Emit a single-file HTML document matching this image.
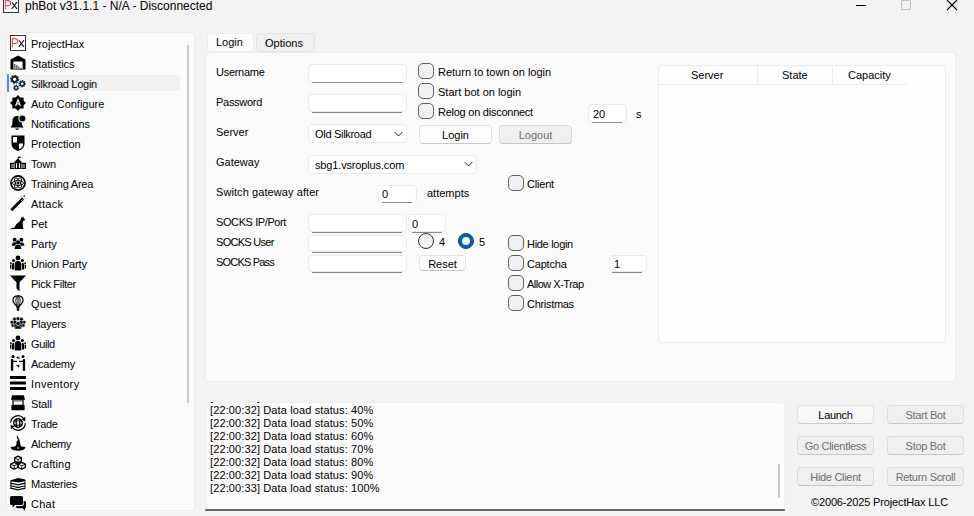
<!DOCTYPE html>
<html><head><meta charset="utf-8">
<style>
*{margin:0;padding:0;box-sizing:border-box}
html,body{width:974px;height:516px;overflow:hidden;background:#f3f3f3;font-family:"Liberation Sans",sans-serif;color:#000}
.a{position:absolute}
.t{position:absolute;font-size:11px;line-height:13px;white-space:nowrap}
.side .t,.st{letter-spacing:-0.2px}
.panel{position:absolute;background:#fbfbfb;border:1px solid #ececec;border-radius:4px}
.inp{position:absolute;background:#fff;border:1px solid #ebebeb;border-radius:4px}
.ul{position:absolute;height:1px;background:#8a8a8a}
.cb{position:absolute;width:16px;height:16px;border:1px solid #5e5e5e;border-radius:5px;background:#f1f1f1}
.btn{position:absolute;background:#fdfdfd;border:1px solid #e3e3e3;border-bottom-color:#c8c8c8;border-radius:4px;font-size:11px;line-height:18px;letter-spacing:-0.3px;text-align:center;white-space:nowrap}
.dis{background:#efefef;color:#6d6d6d;border-color:#dcdcdc;border-bottom-color:#c4c4c4}
.side .t{left:31px}
.ic{position:absolute;left:10px;width:16px;height:16px}
</style></head><body>

<!-- title bar -->
<svg class="a" style="left:3px;top:-3px" width="16" height="16" viewBox="0 0 16 16"><rect x="0.5" y="0.5" width="15" height="15" fill="#fff" stroke="#333" stroke-width="1"/><path d="M2.4 12.2V3.6H5Q7.7 3.6 7.7 6.1Q7.7 8.6 5 8.6H2.4" fill="none" stroke="#ff4848" stroke-width="1.1"/><path d="M8.8 5.2L14 11.9M14 5.2L8.7 11.9" fill="none" stroke="#111" stroke-width="1.05"/></svg>
<div class="t" style="left:25px;top:-1px;font-size:12px;line-height:15px;letter-spacing:0">phBot v31.1.1 - N/A - Disconnected</div>
<div class="a" style="left:856px;top:5px;width:10px;height:1px;background:#000"></div>
<div class="a" style="left:901px;top:0px;width:10px;height:10px;border:1px solid #bdbdbd;border-radius:1px"></div>
<svg class="a" style="left:946px;top:-1px" width="12" height="12" viewBox="0 0 12 12"><path d="M1 1L11 11M11 1L1 11" stroke="#000" stroke-width="1.1"/></svg>

<!-- sidebar -->
<div class="panel side" style="left:6px;top:32px;width:189px;height:479px">
</div>
<div class="a" style="left:9px;top:75px;width:171px;height:16px;background:#f0f0f0;border-radius:3px"></div>
<div class="a" style="left:7px;top:74px;width:2px;height:18px;background:#4f8fd6;border-radius:1px"></div>
<div class="a" style="left:187px;top:45px;width:2px;height:358px;background:#c6c6ca;border-radius:1px"></div>

<div id="sideitems">
<svg class="ic" style="top:35px" width="16" height="16" viewBox="0 0 16 16"><rect x="0.5" y="0.5" width="15" height="15" fill="#fff" stroke="#333" stroke-width="1"/><path d="M2.4 12.2V3.6H5Q7.7 3.6 7.7 6.1Q7.7 8.6 5 8.6H2.4" fill="none" stroke="#ff4848" stroke-width="1.1"/><path d="M8.8 5.2L14 11.9M14 5.2L8.7 11.9" fill="none" stroke="#111" stroke-width="1.05"/></svg>
<div class="t" style="left:31px;top:38px;letter-spacing:-0.07px">ProjectHax</div>
<svg class="ic" style="top:55px" width="16" height="16" viewBox="0 0 16 16"><path d="M0.5 14.5V4.6L8 0.6L15.5 4.6V14.5H12.6V6.6H3.4V14.5Z" fill="#000"/><g fill="#555"><rect x="4.2" y="9" width="1.3" height="5.5"/><rect x="6.2" y="10" width="1.3" height="4.5"/><rect x="8.2" y="11.5" width="1.3" height="3"/><rect x="10.2" y="12.8" width="1.5" height="1.7"/></g><rect x="3.4" y="14" width="9.2" height="0.6" fill="#222"/></svg>
<div class="t" style="left:31px;top:58px;letter-spacing:-0.06px">Statistics</div>
<svg class="ic" style="top:75px" width="16" height="16" viewBox="0 0 16 16"><path d="M9.20 4.35 L8.86 6.04 L7.81 5.92 L7.31 6.67 L7.82 7.59 L6.38 8.54 L5.73 7.72 L4.84 7.89 L4.55 8.90 L2.86 8.56 L2.98 7.51 L2.23 7.01 L1.31 7.52 L0.36 6.08 L1.18 5.43 L1.01 4.54 L0.00 4.25 L0.34 2.56 L1.39 2.68 L1.89 1.93 L1.38 1.01 L2.82 0.06 L3.47 0.88 L4.36 0.71 L4.65 -0.30 L6.34 0.04 L6.22 1.09 L6.97 1.59 L7.89 1.08 L8.84 2.52 L8.02 3.17 L8.19 4.06Z" fill="#12263b"/><circle cx="4.6" cy="4.3" r="1.6" fill="#fff"/><path d="M15.89 8.37 L15.75 9.75 L14.81 9.70 L14.48 10.32 L15.04 11.07 L13.96 11.95 L13.34 11.26 L12.67 11.46 L12.53 12.39 L11.15 12.25 L11.20 11.31 L10.58 10.98 L9.83 11.54 L8.95 10.46 L9.64 9.84 L9.44 9.17 L8.51 9.03 L8.65 7.65 L9.59 7.70 L9.92 7.08 L9.36 6.33 L10.44 5.45 L11.06 6.14 L11.73 5.94 L11.87 5.01 L13.25 5.15 L13.20 6.09 L13.82 6.42 L14.57 5.86 L15.45 6.94 L14.76 7.56 L14.96 8.23Z" fill="#12263b"/><circle cx="12.2" cy="8.7" r="1.25" fill="#fff"/><path d="M9.09 13.05 L8.71 14.28 L7.99 14.11 L7.54 14.59 L7.77 15.30 L6.57 15.76 L6.26 15.09 L5.60 15.04 L5.19 15.66 L4.08 15.02 L4.40 14.35 L4.03 13.81 L3.30 13.87 L3.11 12.60 L3.83 12.44 L4.02 11.81 L3.52 11.27 L4.39 10.34 L4.96 10.80 L5.58 10.56 L5.68 9.83 L6.96 9.93 L6.95 10.66 L7.52 10.99 L8.16 10.62 L8.88 11.68 L8.30 12.14 L8.40 12.79Z" fill="#12263b"/><circle cx="6.1" cy="12.8" r="1.0" fill="#fff"/></svg>
<div class="t" style="left:31px;top:78px;letter-spacing:-0.27px">Silkroad Login</div>
<svg class="ic" style="top:95px" width="16" height="16" viewBox="0 0 16 16"><path d="M8 0L10.3 2.4L13.6 2.4L13.6 5.7L16 8L13.6 10.3L13.6 13.6L10.3 13.6L8 16L5.7 13.6L2.4 13.6L2.4 10.3L0 8L2.4 5.7L2.4 2.4L5.7 2.4Z" fill="#000"/><path d="M5.6 11L8 4.8L10.4 11M6.5 9H9.5" fill="none" stroke="#fff" stroke-width="1.2"/></svg>
<div class="t" style="left:31px;top:98px;letter-spacing:0.0px">Auto Configure</div>
<svg class="ic" style="top:115px" width="16" height="16" viewBox="0 0 16 16"><path d="M7 1Q2.4 1 2.4 6.6V9.6L0.6 12.5H13.6L11.8 9.6V6.6Q11.8 1 7 1Z" fill="#000"/><circle cx="12.4" cy="3.4" r="4" fill="#fbfbfb"/><circle cx="12.4" cy="3.4" r="3" fill="#000"/><path d="M4.9 13.6Q7.1 16.4 9.3 13.6Z" fill="#000"/></svg>
<div class="t" style="left:31px;top:118px;letter-spacing:-0.07px">Notifications</div>
<svg class="ic" style="top:135px" width="16" height="16" viewBox="0 0 16 16"><path d="M1.5 0.5H14.5V9Q14.5 14 8 16Q1.5 14 1.5 9Z" fill="#000"/><rect x="3" y="2" width="4" height="5.5" fill="#fff"/><path d="M9 8.5H13V10Q12.5 13 9 14.3Z" fill="#fff"/></svg>
<div class="t" style="left:31px;top:138px;letter-spacing:0.02px">Protection</div>
<svg class="ic" style="top:155px" width="16" height="16" viewBox="0 0 16 16"><path d="M8.3 2V4" stroke="#000" stroke-width="0.9"/><path d="M8.3 1.6H10.6V3H8.3Z" fill="#000"/><path d="M4 7.2L8 3.6L12 7.2Z" fill="#000"/><rect x="4.3" y="7" width="7.4" height="7" fill="#000"/><rect x="0" y="7.8" width="4.8" height="6.2" fill="#000"/><rect x="11.2" y="7.8" width="4.8" height="6.2" fill="#000"/><g fill="#fff"><rect x="6" y="8.3" width="1.1" height="4.7"/><rect x="8.9" y="8.3" width="1.1" height="4.7"/><rect x="1" y="9.6" width="3" height="0.9"/><rect x="1" y="11.6" width="3" height="0.9"/><rect x="12" y="9.6" width="3" height="0.9"/><rect x="12" y="11.6" width="3" height="0.9"/><rect x="4.4" y="8.2" width="0.5" height="5.3"/><rect x="11.1" y="8.2" width="0.5" height="5.3"/></g></svg>
<div class="t" style="left:31px;top:158px;letter-spacing:-0.18px">Town</div>
<svg class="ic" style="top:175px" width="16" height="16" viewBox="0 0 16 16"><circle cx="8" cy="8" r="7.9" fill="#000"/><circle cx="8" cy="8" r="6.2" fill="#fff"/><g fill="none" stroke="#000" stroke-width="0.85"><ellipse cx="8" cy="8" rx="5.6" ry="2.4"/><ellipse cx="8" cy="8" rx="5.6" ry="2.4" transform="rotate(60 8 8)"/><ellipse cx="8" cy="8" rx="5.6" ry="2.4" transform="rotate(-60 8 8)"/></g><circle cx="8" cy="8" r="2" fill="#fff"/><circle cx="8" cy="8" r="1.5" fill="#000"/></svg>
<div class="t" style="left:31px;top:178px;letter-spacing:-0.22px">Training Area</div>
<svg class="ic" style="top:195px" width="16" height="16" viewBox="0 0 16 16"><path d="M1.3 15.2L13 3.5" stroke="#000" stroke-width="2.8"/><path d="M11.3 5.7L12.4 4.6" stroke="#fff" stroke-width="1"/><circle cx="14.3" cy="0.9" r="0.9" fill="#444"/><path d="M11 1.6L12.2 1.4M14.8 3.4L15.6 4.4" stroke="#888" stroke-width="0.6"/></svg>
<div class="t" style="left:31px;top:198px;letter-spacing:0.28px">Attack</div>
<svg class="ic" style="top:215px" width="16" height="16" viewBox="0 0 16 16"><path d="M13.2 1.2L13.8 3.2L15.3 4.6L14.6 5.6L13.1 5.8L12.6 8L13.1 12.5L13.6 14H5.5Q3 14 0.8 14.3L0.5 13.4Q3 13 4.6 12.4Q5.4 9 8.4 7.6Q10.4 6.2 11 3.6L11.9 1.4L12.5 2.8Z" fill="#000"/></svg>
<div class="t" style="left:31px;top:218px;letter-spacing:-0.07px">Pet</div>
<svg class="ic" style="top:235px" width="16" height="16" viewBox="0 0 16 16"><g fill="#000" transform="translate(1.3 1.5) scale(0.84)"><circle cx="4" cy="3.8" r="2.3"/><circle cx="12" cy="3.8" r="2.3"/><circle cx="8" cy="6.8" r="2.4"/><path d="M0.5 11Q0.5 6.8 4 6.8Q6 6.8 6.5 8.5Q4.5 9.5 4.5 11Z"/><path d="M15.5 11Q15.5 6.8 12 6.8Q10 6.8 9.5 8.5Q11.5 9.5 11.5 11Z"/><path d="M4 15Q4 9.5 8 9.5Q12 9.5 12 15Z"/></g></svg>
<div class="t" style="left:31px;top:238px;letter-spacing:0.02px">Party</div>
<svg class="ic" style="top:255px" width="16" height="16" viewBox="0 0 16 16"><g fill="#000"><circle cx="8" cy="3" r="2.4"/><path d="M4.8 15.5V9Q4.8 6 8 6Q11.2 6 11.2 9V15.5Z"/><circle cx="3.6" cy="5.6" r="1.5"/><circle cx="12.4" cy="5.6" r="1.5"/><path d="M2 14.5V9.5Q2 7.8 3.6 7.8Q4.3 7.8 4.2 8V14.5Z"/><path d="M14 14.5V9.5Q14 7.8 12.4 7.8Q11.7 7.8 11.8 8V14.5Z"/><circle cx="0.9" cy="8.2" r="0.9"/><circle cx="15.1" cy="8.2" r="0.9"/><rect x="0" y="9.6" width="1.4" height="4"/><rect x="14.6" y="9.6" width="1.4" height="4"/></g></svg>
<div class="t" style="left:31px;top:258px;letter-spacing:-0.15px">Union Party</div>
<svg class="ic" style="top:275px" width="16" height="16" viewBox="0 0 16 16"><path d="M0 0.5H16L9.5 7.5V16.5L6.5 13.5V7.5Z" fill="#000"/></svg>
<div class="t" style="left:31px;top:278px;letter-spacing:-0.3px">Pick Filter</div>
<svg class="ic" style="top:295px" width="16" height="16" viewBox="0 0 16 16"><g fill="none" stroke="#000" stroke-width="1.2"><path d="M8 0.8Q3 0.8 3 5.3Q3 7.8 6.4 10.8L7.4 13"/><path d="M8 0.8Q13 0.8 13 5.3Q13 7.8 9.6 10.8L8.6 13"/><path d="M8 0.8Q5.6 2.5 5.8 6Q6 8.6 7.6 12.5" stroke-width="0.9"/><path d="M8 0.8Q10.4 2.5 10.2 6Q10 8.6 8.4 12.5" stroke-width="0.9"/><path d="M8 0.8V12.8" stroke-width="1"/></g><rect x="6.8" y="13.2" width="2.4" height="2.5" fill="#000"/></svg>
<div class="t" style="left:31px;top:298px;letter-spacing:0.12px">Quest</div>
<svg class="ic" style="top:315px" width="16" height="16" viewBox="0 0 16 16"><g fill="#000" stroke="#fff" stroke-width="0.45"><circle cx="4.6" cy="4.2" r="1.9"/><circle cx="8" cy="3.6" r="1.9"/><circle cx="11.4" cy="4.2" r="1.9"/><circle cx="1.9" cy="7.2" r="1.8"/><circle cx="14.1" cy="7.2" r="1.8"/><circle cx="5" cy="7.4" r="1.9"/><circle cx="11" cy="7.4" r="1.9"/><circle cx="2.8" cy="10.4" r="1.8"/><circle cx="13.2" cy="10.4" r="1.8"/><circle cx="5.6" cy="11" r="1.9"/><circle cx="10.4" cy="11" r="1.9"/><circle cx="8" cy="8.6" r="2.0"/><path d="M4.6 14Q4.6 10.6 8 10.6Q11.4 10.6 11.4 14Z"/></g></svg>
<div class="t" style="left:31px;top:318px;letter-spacing:-0.23px">Players</div>
<svg class="ic" style="top:335px" width="16" height="16" viewBox="0 0 16 16"><g fill="#000"><circle cx="8" cy="3" r="2.4"/><path d="M4.8 15.5V9Q4.8 6 8 6Q11.2 6 11.2 9V15.5Z"/><circle cx="3.6" cy="5.6" r="1.5"/><circle cx="12.4" cy="5.6" r="1.5"/><path d="M2 14.5V9.5Q2 7.8 3.6 7.8Q4.3 7.8 4.2 8V14.5Z"/><path d="M14 14.5V9.5Q14 7.8 12.4 7.8Q11.7 7.8 11.8 8V14.5Z"/><circle cx="0.9" cy="8.2" r="0.9"/><circle cx="15.1" cy="8.2" r="0.9"/><rect x="0" y="9.6" width="1.4" height="4"/><rect x="14.6" y="9.6" width="1.4" height="4"/></g></svg>
<div class="t" style="left:31px;top:338px;letter-spacing:-0.36px">Guild</div>
<svg class="ic" style="top:355px" width="16" height="16" viewBox="0 0 16 16"><g fill="#000"><circle cx="3" cy="1.6" r="1.5"/><circle cx="13" cy="1.6" r="1.5"/><rect x="0.9" y="4.1" width="2.3" height="11.8" rx="1"/><rect x="12.8" y="4.1" width="2.3" height="11.8" rx="1"/><rect x="2.6" y="5.8" width="4.4" height="1.3" rx="0.5"/><rect x="9" y="5.8" width="4.4" height="1.3" rx="0.5"/><path d="M6.3 2.6L8.2 1.1V2Q9.9 2.1 10.2 3.9Q9.2 3.1 8.2 3.2V4.1Z"/><path d="M9.9 10.9L8 12.4V11.5Q6.3 11.4 6 9.6Q7 10.4 8 10.3V9.4Z"/></g></svg>
<div class="t" style="left:31px;top:358px;letter-spacing:-0.27px">Academy</div>
<svg class="ic" style="top:375px" width="16" height="16" viewBox="0 0 16 16"><g fill="#000"><rect x="0" y="1" width="16" height="3"/><rect x="0" y="6.5" width="16" height="3"/><rect x="0" y="12" width="16" height="3"/></g></svg>
<div class="t" style="left:31px;top:378px;letter-spacing:0.36px">Inventory</div>
<svg class="ic" style="top:395px" width="16" height="16" viewBox="0 0 16 16"><g fill="#000"><path d="M3 0.3H13Q14.3 0.3 14.3 1.6V4.6H1.7V1.6Q1.7 0.3 3 0.3Z"/><rect x="1.2" y="3.2" width="13.6" height="1.6"/><rect x="2.3" y="5.4" width="11.4" height="0.9" fill="#333"/><rect x="2.4" y="5.4" width="1.2" height="5"/><rect x="12.4" y="5.4" width="1.2" height="5"/><rect x="1.4" y="9.8" width="13.2" height="5.5" rx="0.9"/></g></svg>
<div class="t" style="left:31px;top:398px;letter-spacing:-0.14px">Stall</div>
<svg class="ic" style="top:415px" width="16" height="16" viewBox="0 0 16 16"><path d="M0.70 7.75A7.3 7.3 0 0 1 13.42 3.12" fill="none" stroke="#000" stroke-width="1.2"/><path d="M15.30 8.25A7.3 7.3 0 0 1 2.58 12.88" fill="none" stroke="#000" stroke-width="1.2"/><path d="M15.2 1.8L15.4 6.2L11.4 4.4Z" fill="#000"/><path d="M0.8 14.2L0.6 9.8L4.6 11.6Z" fill="#000"/><circle cx="8" cy="8" r="4.3" fill="none" stroke="#000" stroke-width="1.4"/><g fill="#000"><rect x="5.6" y="4" width="1.3" height="8"/><rect x="9.1" y="4" width="1.3" height="8"/><rect x="4" y="5.4" width="8" height="1.1"/><rect x="4" y="9.5" width="8" height="1.1"/></g><rect x="7" y="6.6" width="2" height="2.8" fill="#fff"/></svg>
<div class="t" style="left:31px;top:418px;letter-spacing:-0.38px">Trade</div>
<svg class="ic" style="top:435px" width="16" height="16" viewBox="0 0 16 16"><path d="M7 0Q6 3 8.5 5Q6 5.5 6.5 9Q6 10.5 5 11.5Q1 11.5 0.5 12.5Q2 15.8 8 15.8Q14 15.8 15.5 12.5Q15 11.5 11 11.5Q10 9 10 7Q9.5 4 7 0Z" fill="#000"/><rect x="7" y="12" width="2" height="2" fill="#777"/></svg>
<div class="t" style="left:31px;top:438px;letter-spacing:-0.29px">Alchemy</div>
<svg class="ic" style="top:455px" width="16" height="16" viewBox="0 0 16 16"><path d="M8 1.2L11.4 2.9L11.4 6.1L8 7.8L4.6 6.1L4.6 2.9Z" fill="#fff" stroke="#000" stroke-width="1.3" stroke-linejoin="round"/><path d="M4.6 2.9L8 4.6L11.4 2.9M8 4.6L8 7.8" fill="none" stroke="#000" stroke-width="0.9"/><path d="M4.2 7.4L7.7 9.1L7.7 12.5L4.2 14.200000000000001L0.7000000000000002 12.5L0.7000000000000002 9.1Z" fill="#fff" stroke="#000" stroke-width="1.3" stroke-linejoin="round"/><path d="M0.7000000000000002 9.1L4.2 10.8L7.7 9.1M4.2 10.8L4.2 14.200000000000001" fill="none" stroke="#000" stroke-width="0.9"/><path d="M11.8 7.4L15.3 9.1L15.3 12.5L11.8 14.200000000000001L8.3 12.5L8.3 9.1Z" fill="#fff" stroke="#000" stroke-width="1.3" stroke-linejoin="round"/><path d="M8.3 9.1L11.8 10.8L15.3 9.1M11.8 10.8L11.8 14.200000000000001" fill="none" stroke="#000" stroke-width="0.9"/></svg>
<div class="t" style="left:31px;top:458px;letter-spacing:0.14px">Crafting</div>
<svg class="ic" style="top:475px" width="16" height="16" viewBox="0 0 16 16"><path d="M0.8 5.2L8 3L15.2 4.6V6.2L8 7.6L0.8 6.3Z" fill="#000"/><g fill="none" stroke="#000" stroke-width="1.15" stroke-linejoin="round" stroke-linecap="round"><path d="M1 8.4Q4 8.6 8 10Q12 8.6 15 8.4"/><path d="M1 11Q4 11.2 8 12.6Q12 11.2 15 11"/><path d="M1.2 13.4Q4 13.8 8 15Q12 13.8 14.8 13.4"/><path d="M1 6V13.4"/><path d="M15 6V13.4" stroke-width="0.8"/></g></svg>
<div class="t" style="left:31px;top:478px;letter-spacing:-0.18px">Masteries</div>
<svg class="ic" style="top:495px" width="16" height="16" viewBox="0 0 16 16"><g fill="#000"><path d="M1.5 1H11.5Q13 1 13 2.5V8.5Q13 10 11.5 10H5L2.5 12.5V10H1.5Q0 10 0 8.5V2.5Q0 1 1.5 1Z"/><path d="M13.5 6H14.5Q16 6 16 7.5V12Q16 13 15 13.2V15.5L12.5 13.2H7Q6 13.2 6 11H12Q14 11 13.8 9Z"/></g></svg>
<div class="t" style="left:31px;top:498px;letter-spacing:0.25px">Chat</div>
</div>
<!-- tabs -->
<div class="a" style="left:207px;top:33px;width:47px;height:19px;background:#fbfbfb;border:1px solid #ececec;border-radius:4px"></div>
<div class="t" style="left:216px;top:36px">Login</div>
<div class="a" style="left:256px;top:33px;width:59px;height:19px;background:#f0f0f0;border:1px solid #e4e4e4;border-radius:4px"></div>
<div class="t" style="left:265px;top:37px">Options</div>

<!-- tab panel -->
<div class="panel" style="left:205px;top:52px;width:751px;height:330px"></div>

<!-- labels -->
<div class="t" style="left:216px;top:66px;letter-spacing:-0.28px">Username</div>
<div class="t" style="left:216px;top:96px;letter-spacing:-0.28px">Password</div>
<div class="t" style="left:216px;top:126px">Server</div>
<div class="t" style="left:216px;top:156px">Gateway</div>
<div class="t" style="left:216px;top:186px;letter-spacing:0.08px">Switch gateway after</div>
<div class="t" style="left:216px;top:216px;letter-spacing:-0.4px">SOCKS IP/Port</div>
<div class="t" style="left:216px;top:236px;letter-spacing:-0.71px">SOCKS User</div>
<div class="t" style="left:216px;top:256px;letter-spacing:-0.82px">SOCKS Pass</div>

<!-- inputs -->
<div class="inp" style="left:308px;top:64px;width:99px;height:19px"></div><div class="ul" style="left:312px;top:82px;width:90px"></div>
<div class="inp" style="left:308px;top:94px;width:99px;height:18px"></div><div class="ul" style="left:312px;top:112px;width:90px"></div>
<div class="inp" style="left:308px;top:124px;width:99px;height:19px"></div>
<div class="t" style="left:315px;top:128px;letter-spacing:-0.3px">Old Silkroad</div>
<svg class="a" style="left:394px;top:131px" width="10" height="7" viewBox="0 0 10 7"><path d="M0.8 1.2L4.5 5L8.2 1.2" fill="none" stroke="#222" stroke-width="1"/></svg>

<div class="inp" style="left:308px;top:155px;width:169px;height:19px"></div>
<div class="t" style="left:315px;top:159px;letter-spacing:-0.15px">sbg1.vsroplus.com</div>
<svg class="a" style="left:464px;top:161px" width="10" height="7" viewBox="0 0 10 7"><path d="M0.8 1.2L4.5 5L8.2 1.2" fill="none" stroke="#222" stroke-width="1"/></svg>

<div class="inp" style="left:378px;top:185px;width:39px;height:18px"></div><div class="ul" style="left:382px;top:202px;width:30px"></div>
<div class="t" style="left:382px;top:188px">0</div>
<div class="t" style="left:427px;top:187px">attempts</div>

<div class="inp" style="left:308px;top:214px;width:99px;height:18px"></div><div class="ul" style="left:312px;top:232px;width:90px"></div>
<div class="inp" style="left:408px;top:214px;width:38px;height:18px"></div><div class="ul" style="left:412px;top:232px;width:30px"></div>
<div class="t" style="left:412px;top:218px">0</div>
<div class="inp" style="left:308px;top:235px;width:99px;height:17px"></div><div class="ul" style="left:312px;top:252px;width:90px"></div>
<div class="inp" style="left:308px;top:255px;width:99px;height:17px"></div><div class="ul" style="left:312px;top:272px;width:90px"></div>

<!-- radios -->
<div class="a" style="left:418px;top:233px;width:16px;height:16px;border:1px solid #333;border-radius:50%;background:#f0f0f0"></div>
<div class="t" style="left:439px;top:236px">4</div>
<div class="a" style="left:458px;top:233px;width:16px;height:16px;border-radius:50%;background:#0b5cb3;border:1px solid #0a4a90"></div>
<div class="a" style="left:462px;top:237px;width:8px;height:8px;border-radius:50%;background:#f4f4f4"></div>
<div class="t" style="left:479px;top:236px">5</div>
<div class="btn" style="left:419px;top:255px;width:47px;height:16px;line-height:17px;letter-spacing:0">Reset</div>

<!-- checkboxes -->
<div class="cb" style="left:418px;top:63px"></div><div class="t" style="left:438px;top:66px">Return to town on login</div>
<div class="cb" style="left:418px;top:83px"></div><div class="t" style="left:438px;top:86px">Start bot on login</div>
<div class="cb" style="left:418px;top:103px"></div><div class="t" style="left:438px;top:106px;letter-spacing:-0.25px">Relog on disconnect</div>
<div class="inp" style="left:588px;top:104px;width:39px;height:19px"></div><div class="ul" style="left:592px;top:122px;width:30px"></div>
<div class="t" style="left:593px;top:108px">20</div>
<div class="t" style="left:636px;top:108px">s</div>
<div class="btn" style="left:419px;top:125px;width:73px;height:19px;line-height:19px;letter-spacing:0">Login</div>
<div class="btn dis" style="left:499px;top:125px;width:73px;height:19px;line-height:19px;letter-spacing:0">Logout</div>

<div class="cb" style="left:508px;top:175px"></div><div class="t" style="left:527px;top:178px;letter-spacing:-0.2px">Client</div>
<div class="cb" style="left:508px;top:235px"></div><div class="t" style="left:527px;top:238px;letter-spacing:-0.3px">Hide login</div>
<div class="cb" style="left:508px;top:255px"></div><div class="t" style="left:527px;top:258px;letter-spacing:-0.2px">Captcha</div>
<div class="cb" style="left:508px;top:275px"></div><div class="t" style="left:527px;top:278px;letter-spacing:-0.5px">Allow X-Trap</div>
<div class="cb" style="left:508px;top:295px"></div><div class="t" style="left:527px;top:298px;letter-spacing:-0.3px">Christmas</div>
<div class="inp" style="left:609px;top:255px;width:38px;height:17px"></div><div class="ul" style="left:612px;top:272px;width:30px"></div>
<div class="t" style="left:614px;top:258px">1</div>

<!-- server list -->
<div class="a" style="left:658px;top:65px;width:288px;height:278px;background:#fefefe;border:1px solid #ececec;border-radius:4px"></div>
<div class="a" style="left:659px;top:84px;width:248px;height:1px;background:#ececec"></div>
<div class="a" style="left:757px;top:66px;width:1px;height:18px;background:#ececec"></div>
<div class="a" style="left:832px;top:66px;width:1px;height:18px;background:#ececec"></div>
<div class="t" style="left:691px;top:69px">Server</div>
<div class="t" style="left:782px;top:69px">State</div>
<div class="t" style="left:848px;top:69px">Capacity</div>

<!-- log -->
<div class="a" style="left:206px;top:402px;width:579px;height:109px;background:#fbfbfb;border:1px solid #f0f0f0;border-bottom:none;border-radius:4px 4px 0 0;overflow:hidden">
</div>
<div class="a" style="left:205px;top:509px;width:580px;height:2px;background:#666;border-radius:1px"></div>
<div class="a" style="left:778px;top:464px;width:2px;height:34px;background:#c6c6ca;border-radius:1px"></div>
<div class="a" style="left:210px;top:402px;width:560px;height:104px;overflow:hidden">
<div class="t" style="left:0;top:-11px;line-height:13px;letter-spacing:0.12px">[22:00:32] Data load status: 30%<br>[22:00:32] Data load status: 40%<br>[22:00:32] Data load status: 50%<br>[22:00:32] Data load status: 60%<br>[22:00:32] Data load status: 70%<br>[22:00:32] Data load status: 80%<br>[22:00:32] Data load status: 90%<br>[22:00:33] Data load status: 100%</div>
</div>

<!-- right buttons -->
<div class="btn" style="left:797px;top:405px;width:77px;height:19px;background:#f7f7f7">Launch</div>
<div class="btn dis" style="left:887px;top:405px;width:77px;height:19px">Start Bot</div>
<div class="btn dis" style="left:797px;top:436px;width:77px;height:19px">Go Clientless</div>
<div class="btn dis" style="left:887px;top:436px;width:77px;height:19px">Stop Bot</div>
<div class="btn dis" style="left:797px;top:467px;width:77px;height:19px">Hide Client</div>
<div class="btn dis" style="left:887px;top:467px;width:77px;height:19px">Return Scroll</div>
<div class="t" style="left:811px;top:496px;letter-spacing:-0.15px">©2006-2025 ProjectHax LLC</div>

</body></html>
